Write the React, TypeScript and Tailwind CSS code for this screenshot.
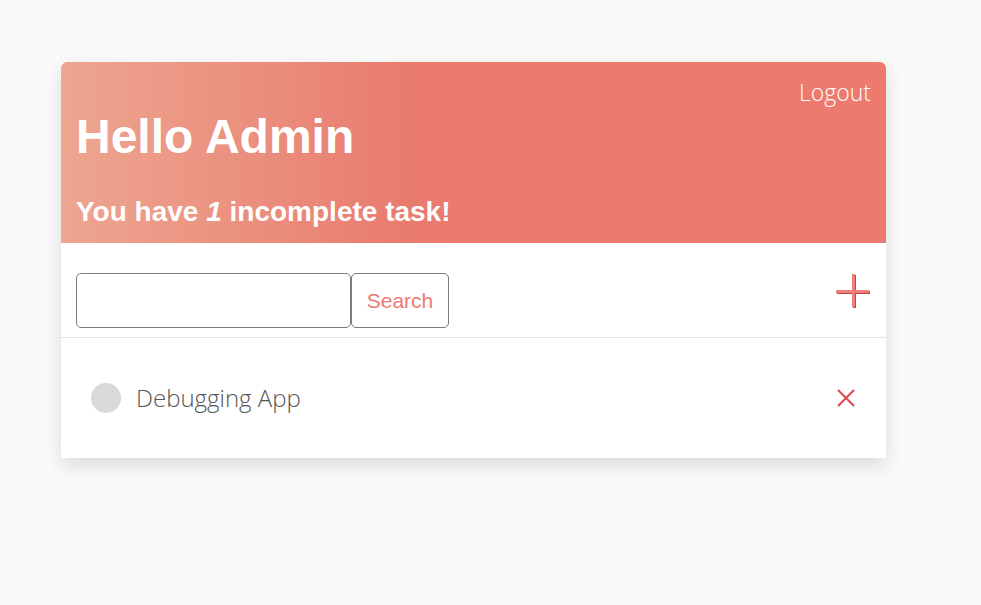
import { useState } from "react";

const tasks = [{ id: 1, title: "Debugging App", done: false }];

export default function App() {
  const [query, setQuery] = useState("");
  const left = tasks.filter((t) => !t.done).length;

  return (
    <div className="min-h-[605px] bg-[#fafafa] pt-[62px] pl-[61px] font-['Liberation_Sans',Arial,sans-serif]">
      <div className="w-[825px] bg-white shadow-[0_8px_18px_rgba(0,0,0,0.12)]">
        <header className="relative h-[181px] rounded-t-[6px] bg-[linear-gradient(to_right,#eda690_0%,#ea8a7a_28%,#e97b6e_42%,#ed7a6f_60%,#ed7a6f_100%)] px-[15px] text-white">
          <button className="absolute right-[15px] top-[19px] font-['Open_Sans',sans-serif] text-[23px] font-light leading-none">
            Logout
          </button>
          <h1 className="pt-[51px] text-[48px] font-bold leading-none">Hello Admin</h1>
          <p className="mt-[37px] text-[28px] font-bold leading-none">
            You have <em>{left}</em> incomplete task!
          </p>
        </header>

        <div className="flex items-start justify-between border-b border-[#e2e2e2] pl-[15px] pr-[14px] pt-[30px] pb-[9px]">
          <div className="flex">
            <input
              value={query}
              onChange={(e) => setQuery(e.target.value)}
              className="h-[55px] w-[275px] rounded-[5px] border border-[#7a7a7a] px-3 outline-none"
            />
            <button className="h-[55px] w-[98px] rounded-[5px] border border-[#7a7a7a] text-[21px] text-[#ed7a6f]">
              Search
            </button>
          </div>
          <button aria-label="Add task" className="mt-[1px]">
            <svg width="36" height="36" viewBox="0 0 36 36">
              <rect x="17" y="1" width="3" height="33" fill="#b24c47" />
              <rect x="1" y="17" width="33" height="3" fill="#b24c47" />
              <rect x="16" y="0" width="3" height="33" fill="#ef7f78" />
              <rect x="0" y="16" width="33" height="3" fill="#ef7f78" />
            </svg>
          </button>
        </div>

        {tasks.map((t) => (
          <div key={t.id} className="flex h-[120px] items-center justify-between pl-[30px] pr-[31px]">
            <div className="flex items-center gap-[15px]">
              <span className="h-[30px] w-[30px] rounded-full bg-[#d9d9d9]" />
              <span className="font-['Open_Sans',sans-serif] text-[24px] font-light leading-none text-[#555]">{t.title}</span>
            </div>
            <button aria-label="Delete task">
              <svg width="18" height="18" viewBox="0 0 18 18" stroke="#e0484f" strokeWidth="2">
                <path d="M1 1 L17 17 M17 1 L1 17" />
              </svg>
            </button>
          </div>
        ))}
      </div>
    </div>
  );
}
